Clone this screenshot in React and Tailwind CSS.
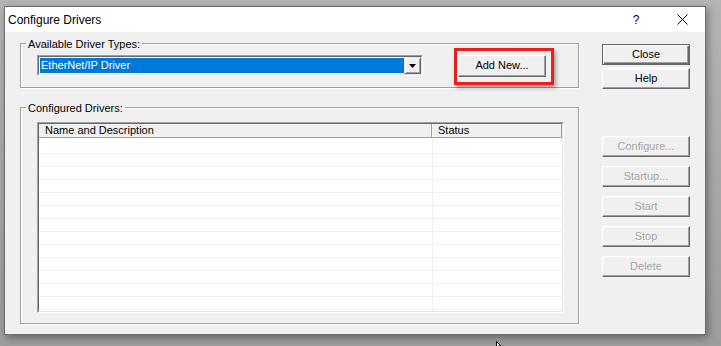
import React from "react";

function Btn({ children, w = "w-[88px]", h = "h-[21px]", disabled = false, isDefault = false, className = "" }) {
  const base = isDefault
    ? "border border-[#646464] shadow-[inset_1px_1px_0_#ffffff,inset_-1px_-1px_0_#696969,inset_-2px_-2px_0_#a0a0a0]"
    : "border border-t-white border-l-white border-b-[#696969] border-r-[#696969] shadow-[inset_-1px_-1px_0_#a0a0a0,inset_1px_1px_0_#f4f4f4]";
  return (
    <div
      className={`${w} ${h} ${base} bg-[#f0f0f0] flex items-center justify-center text-[11px] leading-none ${
        disabled ? "text-[#a0a0a0] text-shadow-[1px_1px_0_#ffffff]" : "text-black"
      } ${className}`}
    >
      {children}
    </div>
  );
}

function Row({ h = "h-[13px]", line = true }) {
  return (
    <div className={`flex ${h} shrink-0 ${line ? "border-b border-[#f0f0f0]" : ""}`}>
      <div className="w-[394px] h-full border-r border-[#f0f0f0]" />
      <div className="flex-1" />
    </div>
  );
}

export default function App() {
  const rows = Array.from({ length: 14 });
  return (
    <div className="relative w-[721px] h-[346px] overflow-hidden bg-linear-to-b from-[#b4b4b4] to-[#9d9d9d] pl-[4px] pt-[6px] font-['Liberation_Sans',Arial,sans-serif]">
      <div className="w-[702px] h-[329px] border border-[#6d6d6d] bg-[#f0f0f0] shadow-[2px_3px_8px_rgba(0,0,0,0.35)] flex flex-col">
        {/* Title bar */}
        <div className="h-[25px] bg-white flex items-center pl-[3px] shrink-0">
          <span className="text-[12px] text-black leading-none">Configure Drivers</span>
          <div className="ml-auto flex h-full">
            <div className="w-[46px] h-full flex items-center justify-center text-[12px] text-black">?</div>
            <div className="w-[46px] h-full flex items-center justify-center">
              <svg width="11" height="11" viewBox="0 0 11 11">
                <path d="M0.5 0.5 L10.5 10.5 M10.5 0.5 L0.5 10.5" stroke="#000" strokeWidth="1" fill="none" />
              </svg>
            </div>
          </div>
        </div>

        {/* Body */}
        <div className="flex flex-1 pl-[15px]">
          {/* Left column */}
          <div className="flex flex-col w-[559px] pt-[11px]">
            {/* Group 1 */}
            <div className="relative h-[45px] border border-[#a0a0a0] shadow-[inset_1px_1px_0_#ffffff,1px_1px_0_#ffffff] flex items-center pl-[16px]">
              <div className="absolute -top-[7px] left-[5px] px-[2px] bg-[#f0f0f0] text-[11px] leading-[14px] text-black">
                Available Driver Types:
              </div>
              {/* Dropdown */}
              <div className="w-[386px] h-[21px] border border-t-[#a0a0a0] border-l-[#a0a0a0] border-b-white border-r-white">
                <div className="w-full h-full border border-t-[#696969] border-l-[#696969] border-b-[#e3e3e3] border-r-[#e3e3e3] bg-white flex">
                  <div className="flex-1 my-[1px] ml-[1px] mr-[0px] bg-[#0078d7] text-white text-[11px] leading-[15px] pl-[1px]">
                    EtherNet/IP Driver
                  </div>
                  <div className="w-[17px] h-full border border-t-[#e3e3e3] border-l-[#e3e3e3] border-b-[#696969] border-r-[#696969] shadow-[inset_1px_1px_0_#ffffff,inset_-1px_-1px_0_#a0a0a0] bg-[#f0f0f0] flex items-center justify-center">
                    <svg width="7" height="4" viewBox="0 0 7 4">
                      <path d="M0 0 H7 L3.5 4 Z" fill="#000" />
                    </svg>
                  </div>
                </div>
              </div>
              {/* Add New */}
              <div className="relative ml-[35px]">
                <div className="absolute -left-[4px] -top-[7px] w-[100px] h-[37px] border-[3px] border-[#ee1c1c] shadow-[2px_3px_4px_rgba(0,0,0,0.35)]" />
                <Btn h="h-[22px]">Add New...</Btn>
              </div>
            </div>

            {/* Group 2 */}
            <div className="relative mt-[19px] h-[217px] border border-[#a0a0a0] shadow-[inset_1px_1px_0_#ffffff,1px_1px_0_#ffffff] pl-[16px] pt-[14px]">
              <div className="absolute -top-[7px] left-[5px] px-[2px] bg-[#f0f0f0] text-[11px] leading-[14px] text-black">
                Configured Drivers:
              </div>
              {/* List view */}
              <div className="w-[527px] h-[191px] border border-t-[#a0a0a0] border-l-[#a0a0a0] border-b-white border-r-white">
                <div className="w-full h-full border border-t-[#696969] border-l-[#696969] border-b-[#e3e3e3] border-r-[#e3e3e3] bg-white flex flex-col overflow-hidden">
                  {/* Header */}
                  <div className="h-[14px] shrink-0 flex bg-[#f0f0f0] border-b border-[#a0a0a0] text-[11px] leading-[13px] text-black">
                    <div className="w-[393px] h-full border-r border-[#a0a0a0] pl-[6px]">Name and Description</div>
                    <div className="flex-1 h-full border-l border-white border-r border-r-[#a0a0a0] pl-[5px]">Status</div>
                  </div>
                  <Row h="h-[3px]" line={false} />
                  {rows.map((_, i) => (
                    <Row key={i} />
                  ))}
                </div>
              </div>
            </div>
          </div>

          {/* Right column */}
          <div className="ml-[23px] pt-[12px] flex flex-col">
            <Btn isDefault>Close</Btn>
            <Btn className="mt-[3px]">Help</Btn>
            <Btn disabled className="mt-[47px]">Configure...</Btn>
            <Btn disabled className="mt-[9px]">Startup...</Btn>
            <Btn disabled className="mt-[9px]">Start</Btn>
            <Btn disabled className="mt-[9px]">Stop</Btn>
            <Btn disabled className="mt-[9px]">Delete</Btn>
          </div>
        </div>
      </div>

      {/* Mouse cursor peeking at bottom */}
      <svg className="absolute left-[496px] top-[341px]" width="8" height="6" viewBox="0 0 8 6">
        <path d="M0.5 0.5 L0.5 6 L2 5 L5 5 Z" fill="#fff" stroke="#000" strokeWidth="1" />
      </svg>
    </div>
  );
}
